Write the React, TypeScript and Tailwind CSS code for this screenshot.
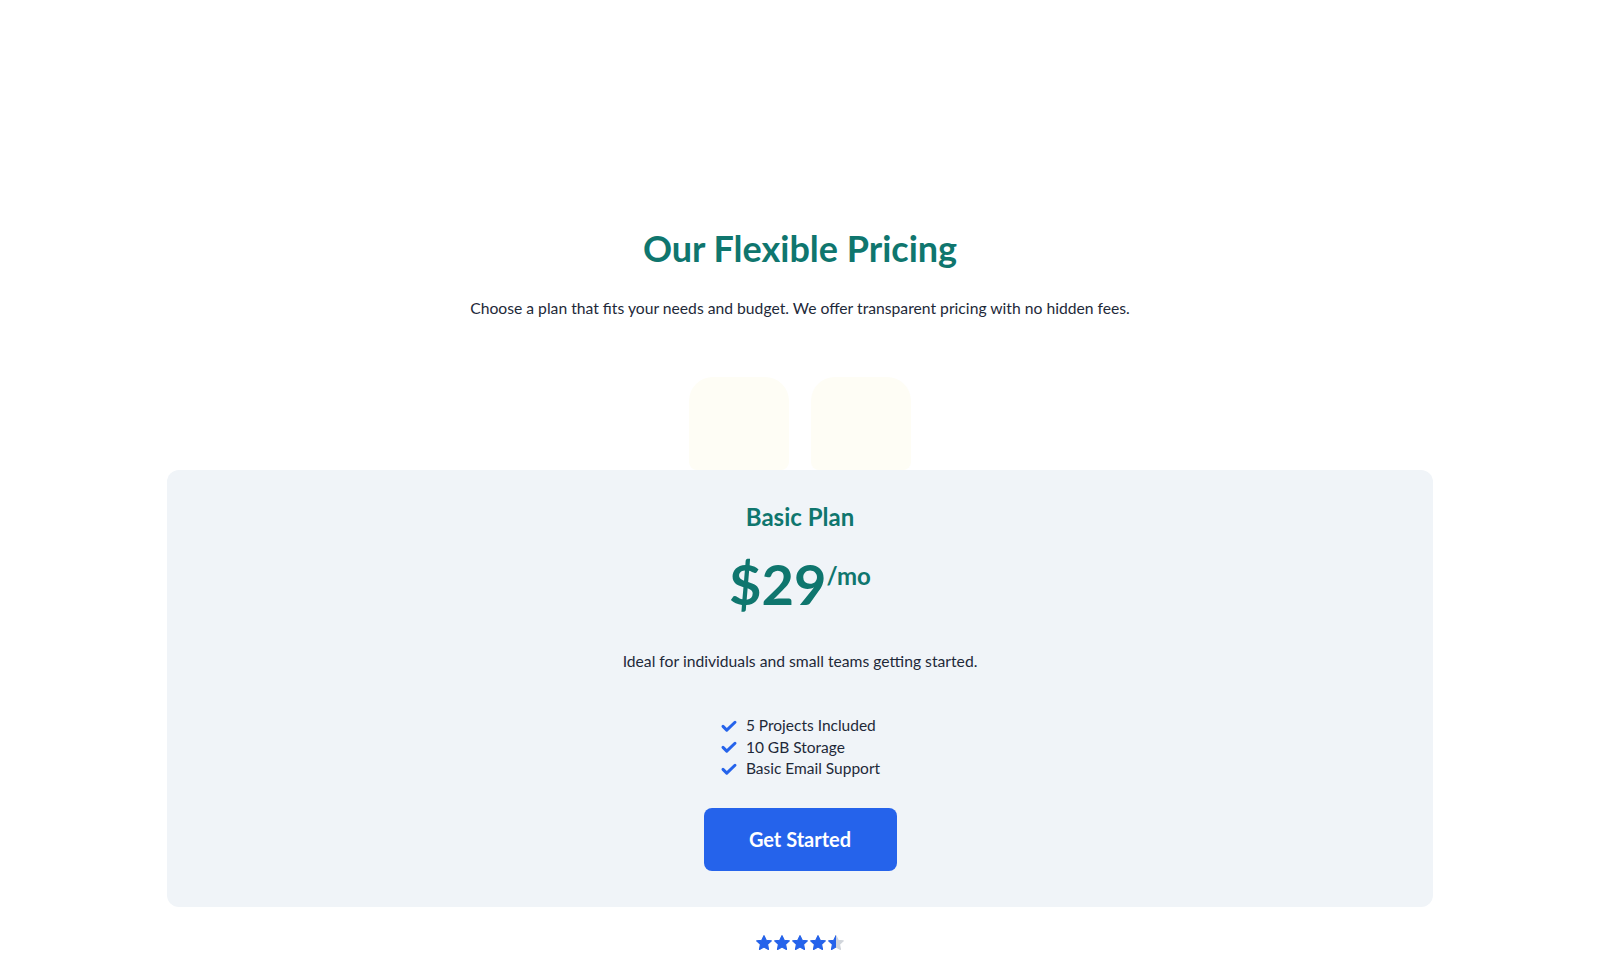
import React from 'react';

const FEATURES = ['5 Projects Included', '10 GB Storage', 'Basic Email Support'];

const Check = () => (
  <svg width="18" height="18" viewBox="0 0 24 24" fill="none" stroke="#2563eb" strokeWidth="4" strokeLinecap="round" strokeLinejoin="round">
    <path d="M4 12.5l5 5L20 7" />
  </svg>
);

const STAR = 'M12 2.2l2.9 6.2 6.8.8-5 4.7 1.3 6.7L12 17.3l-6 3.3 1.3-6.7-5-4.7 6.8-.8z';

const Stars = ({ rating }: { rating: number }) => (
  <div className="flex items-center">
    {[0, 1, 2, 3, 4].map((i) => {
      const fill = Math.max(0, Math.min(1, rating - i));
      return (
        <svg key={i} width="18" height="18" viewBox="0 0 24 24">
          <defs>
            <clipPath id={`star-clip-${i}`}>
              <rect x="0" y="0" width={24 * fill} height="24" />
            </clipPath>
          </defs>
          <path d={STAR} fill="#d1d5db" stroke="#d1d5db" strokeWidth="1.5" strokeLinejoin="round" />
          <path d={STAR} fill="#2563eb" stroke="#2563eb" strokeWidth="1.5" strokeLinejoin="round" clipPath={`url(#star-clip-${i})`} />
        </svg>
      );
    })}
  </div>
);

export default function App() {
  return (
    <div className="min-h-screen bg-white font-['Lato',sans-serif] text-gray-800">
      <section className="flex flex-col items-center pt-[228px] pb-10">
        <h2 className="text-[36px] leading-[40px] font-bold text-[#0f766e]">Our Flexible Pricing</h2>
        <p className="mt-7 text-[15.7px] leading-6 text-gray-800">
          Choose a plan that fits your needs and budget. We offer transparent pricing with no hidden fees.
        </p>

        <div className="mt-[57px] flex gap-[22px]">
          <div className="h-[93px] w-[100px] rounded-t-3xl rounded-b-lg bg-[#fefdf5]" />
          <div className="h-[93px] w-[100px] rounded-t-3xl rounded-b-lg bg-[#fefdf5]" />
        </div>

        <div className="flex w-[1266px] flex-col items-center rounded-xl bg-[#f0f4f8] pt-[31px] pb-9">
          <h3 className="text-2xl leading-8 font-bold text-[#0f766e]">Basic Plan</h3>
          <div className="mt-[23px] flex items-start text-[#0f766e]">
            <span className="text-[56px] leading-none font-bold">$29</span>
            <span className="mt-[8px] text-[24px] leading-none font-bold">/mo</span>
          </div>
          <p className="mt-[37px] text-[15.7px] leading-6 text-gray-800">Ideal for individuals and small teams getting started.</p>

          <ul className="mt-[42px] flex flex-col">
            {FEATURES.map((f) => (
              <li key={f} className="flex items-center gap-2 text-[15.5px] leading-[21.5px] text-gray-800">
                <Check />
                <span>{f}</span>
              </li>
            ))}
          </ul>

          <button className="mt-[28px] h-[63px] w-[193px] rounded-lg bg-[#2563eb] text-xl font-bold text-white">
            Get Started
          </button>
        </div>

        <div className="mt-[27px]">
          <Stars rating={4.5} />
        </div>
      </section>
    </div>
  );
}
